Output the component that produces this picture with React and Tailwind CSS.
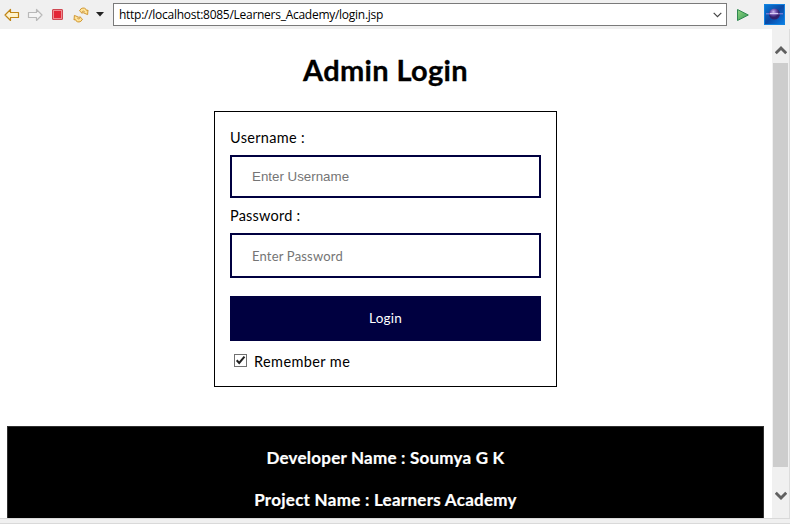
import React from "react";

function Arrow({ stroke, fill, flip }) {
  return (
    <svg width="16" height="16" viewBox="0 0 16 16" className={flip ? "-scale-x-100" : ""}>
      <path d="M1 8 6.5 2.5V5.5H14.5V10.5H6.5V13.5Z" fill={fill} stroke={stroke} strokeWidth="1.2" strokeLinejoin="round" />
    </svg>
  );
}

function Toolbar() {
  return (
    <header className="flex h-[29px] shrink-0 items-center bg-[#f0f0f0] pl-1">
      <Arrow stroke="#c08516" fill="#fff3cc" />
      <div className="ml-[7px] h-4">
        <Arrow stroke="#b9b9b9" fill="#f5f5f5" flip />
      </div>
      <svg className="ml-[7px]" width="16" height="16" viewBox="0 0 16 16">
        <rect x="2.5" y="2.5" width="10" height="10" rx="0.5" fill="#ef8b90" stroke="#cf4852" />
        <rect x="4" y="4" width="7" height="7" fill="#e32636" />
      </svg>
      <svg className="ml-[7px]" width="16" height="16" viewBox="0 0 16 16" fill="#ffe39a" stroke="#cb8d22" strokeWidth="0.9" strokeLinejoin="round">
        <path d="M6.5 3.8 8.2 1.6C10.5.3 13 1.2 13.7 3.6L15 3 14.6 7.6 10.4 5.8 11.5 4.9C10.9 3.9 9.9 3.9 9.3 4.6L9.2 6.4Z" />
        <path d="M9.5 12.2 7.8 14.4C5.5 15.7 3 14.8 2.3 12.4L1 13 1.4 8.4 5.6 10.2 4.5 11.1C5.1 12.1 6.1 12.1 6.7 11.4L6.8 9.6Z" />
      </svg>
      <svg className="ml-[7px]" width="8" height="5" viewBox="0 0 8 5">
        <path d="M0 0H8L4 4.5Z" fill="#222" />
      </svg>
      <div className="ml-[9px] flex h-[23px] w-[614px] items-center border border-[#7a7a7a] bg-white pr-1 pl-[5px]">
        <span className="grow text-[12px] leading-4 tracking-[-0.27px] text-black [font-family:'Open_Sans','Noto_Sans',sans-serif]">
          http://localhost:8085/Learners_Academy/login.jsp
        </span>
        <svg width="9" height="6" viewBox="0 0 9 6">
          <path d="M.7.9 4.5 4.7 8.3.9" fill="none" stroke="#444" strokeWidth="1.2" />
        </svg>
      </div>
      <svg className="ml-[10px]" width="12" height="12" viewBox="0 0 12 12">
        <defs>
          <linearGradient id="run" x2="1" y2="1">
            <stop stopColor="#91d47e" />
            <stop offset="1" stopColor="#359b58" />
          </linearGradient>
        </defs>
        <path d="M.5.5V11.5L11.3 6Z" fill="url(#run)" stroke="#2f8751" />
      </svg>
      <svg className="ml-[15px]" width="21" height="21" viewBox="0 0 21 21">
        <defs>
          <linearGradient id="sky" x2="1" y2="1">
            <stop stopColor="#087ad8" />
            <stop offset=".5" stopColor="#0b48a4" />
            <stop offset="1" stopColor="#087de4" />
          </linearGradient>
          <radialGradient id="planet" cx=".4" cy=".3">
            <stop stopColor="#c9b5ec" />
            <stop offset=".5" stopColor="#7355b0" />
            <stop offset="1" stopColor="#33206a" />
          </radialGradient>
        </defs>
        <rect width="21" height="21" fill="#1181df" />
        <rect x="1" y="1" width="19" height="19" fill="url(#sky)" />
        <circle cx="10.5" cy="10" r="5.5" fill="url(#planet)" />
        <path d="M2 9.8H19" stroke="#9a83d7" />
        <path d="M6 9.5H14" stroke="#d9cdf5" strokeWidth="1.2" />
      </svg>
    </header>
  );
}

function Scrollbar() {
  return (
    <div className="flex w-[18px] shrink-0 flex-col items-center border-r border-[#dcdcdc] bg-[#f0f0f0]">
      <svg className="mt-[16px] shrink-0" width="12" height="10" viewBox="0 0 12 10">
        <path d="M.7 8.3 6 3 11.3 8.3" fill="none" stroke="#606060" strokeWidth="3" />
      </svg>
      <div className="mt-[8px] h-[404px] w-[15px] shrink-0 bg-[#cdcdcd]" />
      <svg className="mt-[24px] shrink-0" width="12" height="10" viewBox="0 0 12 10">
        <path d="M.7 1.7 6 7 11.3 1.7" fill="none" stroke="#606060" strokeWidth="3" />
      </svg>
    </div>
  );
}

function LoginForm() {
  return (
    <form className="mx-auto mt-[19px] flex h-[276px] w-[343px] shrink-0 flex-col border border-black px-[15px] pt-[16px] text-[14.5px] text-black">
      <label htmlFor="user" className="h-[20px] leading-[20px] tracking-[0.32px]">Username :</label>
      <input
        id="user"
        placeholder="Enter Username"
        className="mt-[7px] h-[43px] w-full shrink-0 border-2 border-[#000040] px-5 text-[13.33px] outline-none placeholder:text-[#757575] [font-family:'Liberation_Sans',Arial,sans-serif]"
      />
      <label htmlFor="pass" className="mt-[8px] h-[20px] leading-[20px] tracking-[0.2px]">Password :</label>
      <input
        id="pass"
        type="password"
        placeholder="Enter Password"
        className="mt-[7px] h-[45px] w-full shrink-0 border-2 border-[#000040] px-5 text-[13px] tracking-[0.18px] outline-none placeholder:text-[#757575]"
      />
      <button type="button" className="mt-[18px] h-[45px] shrink-0 bg-[#000040] text-[13.5px] tracking-[0.2px] text-white">Login</button>
      <label className="mt-[10px] flex h-[22px] items-center pl-[4px] leading-[20px] tracking-[0.4px]">
        <svg className="mr-[7px] mb-[3px]" width="13" height="13" viewBox="0 0 13 13">
          <rect x=".5" y=".5" width="12" height="12" fill="white" stroke="#707070" />
          <path d="M2.7 6.3 5.2 9 10.5 2.6" fill="none" stroke="#222" strokeWidth="2" />
        </svg>
        Remember me
      </label>
    </form>
  );
}

export default function App() {
  return (
    <div className="flex h-[524px] w-[790px] flex-col overflow-hidden bg-white [font-family:Lato,'Open_Sans',sans-serif]">
      <Toolbar />
      <div className="flex h-[489px] shrink-0">
        <main className="mr-px flex w-[771px] flex-col overflow-hidden">
          <h1 className="mt-[19px] h-[44px] shrink-0 text-center text-[29px] leading-[44px] font-bold tracking-[0.35px] text-black [-webkit-text-stroke:0.3px_black]">
            Admin Login
          </h1>
          <LoginForm />
          <footer className="mt-[39px] mr-[7px] ml-[7px] flex h-[120px] shrink-0 flex-col items-center border border-[#2f2f2f] bg-black pt-[20px] text-[17px] font-bold text-white">
            <p className="h-[22px] leading-[22px] tracking-[0.22px] [-webkit-text-stroke:0.2px_white]">Developer Name : Soumya G K</p>
            <p className="mt-[20px] h-[22px] leading-[22px] tracking-[0.27px] [-webkit-text-stroke:0.2px_white]">Project Name : Learners Academy</p>
          </footer>
        </main>
        <Scrollbar />
      </div>
      <div className="h-[6px] shrink-0 border-y border-[#d9d9d9] bg-[#f0f0f0]" />
    </div>
  );
}
